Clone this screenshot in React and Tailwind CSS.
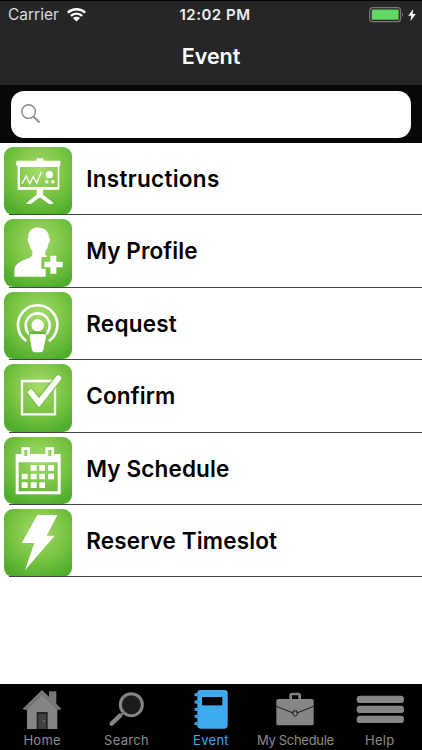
const ICONS = {
  board: {
    viewBox: "12 21 203 203",
    art: (
      <>
        <path d="M49 62h61v-7h20v7h51v15h-3v72h-49v15l31 24-4 4h-9l-25-19h-5l-25 19H80v-4l30-24v-15H53V77h-4zM60 81v60h113V81z" fillRule="evenodd" fill="#fff" />
        <path d="M66 131l13-23 10 23 11-21 10 19 14-33" fill="none" stroke="#fff" strokeWidth="4" />
        <circle cx="148" cy="104" r="11" fill="#fff" />
        <path d="M136 121h9v9h-9zM154 121h9v9h-9z" fill="#fff" />
      </>
    ),
  },
  profile: {
    viewBox: "12 13 203 203",
    art: (
      <path
        d="M116 39c20 0 31 13 31 31 4 2 4 13-2 17-1 10-4 17-9 21v10c0 4 1 5 4 5v4h-16v35h13v24H43v-17c0-17 10-25 29-33 15-6 25-9 25-17v-11c-5-4-8-11-9-21-6-4-7-15-3-18-1-18 11-31 31-31zM151 123h18v18h19v17h-19v19h-18v-19h-18v-17h18z"
        fill="#fff"
      />
    ),
  },
  request: {
    viewBox: "12 14 203 203",
    art: (
      <>
        <path d="M79 161A59 59 0 1 1 147 161" fill="none" stroke="#fff" strokeWidth="8" />
        <path d="M89 141A36 36 0 1 1 137 141" fill="none" stroke="#fff" strokeWidth="8" />
        <circle cx="113" cy="114" r="18" fill="#fff" />
        <path d="M88 133h50v20H88z" fill="#60b838" />
        <circle cx="113" cy="114" r="18" fill="#fff" />
        <path d="M94 140h39q6 0 5 7l-8 41q-2 7-8 7h-18q-6 0-8-7l-7-41q-1-7 5-7z" fill="#fff" />
      </>
    ),
  },
  confirm: {
    viewBox: "12 13 203 203",
    art: (
      <>
        <path d="M66 64h99v100H66z" fill="none" stroke="#fff" strokeWidth="7" />
        <path d="M93 99l24 30 57-72" fill="none" stroke="#78c243" strokeWidth="24" strokeLinecap="round" />
        <path d="M92 98l25 31 58-73" fill="none" stroke="#fff" strokeWidth="17" strokeLinecap="round" />
      </>
    ),
  },
  calendar: {
    viewBox: "12 14 203 203",
    art: (
      <>
        <path
          d="M47 65h17V45h26v20h46V45h26v20h20v121H47zM56 90v87h117V90zM73 52v19h9V52zM145 52v19h9V52z"
          fillRule="evenodd"
          fill="#fff"
        />
        <path
          d="M92 98h18v17H92zM118 98h17v17h-17zM144 98h18v17h-18zM65 124h18v17H65zM92 124h18v17H92zM118 124h17v17h-17zM144 124h18v17h-18zM65 150h18v17H65zM92 150h18v17H92zM118 150h17v17h-17z"
          fill="#fff"
        />
      </>
    ),
  },
  bolt: {
    viewBox: "12 15 203 203",
    art: <path d="M112 33h60l-32 62h24L75 199l28-82H65z" fill="#fff" />,
  },
};

const rows = [
  { label: "Instructions", icon: "board", tracking: "tracking-[0.3px]" },
  { label: "My Profile", icon: "profile", tracking: "tracking-[0.1px]" },
  { label: "Request", icon: "request", tracking: "tracking-[0.25px]" },
  { label: "Confirm", icon: "confirm", tracking: "tracking-[0.15px]" },
  { label: "My Schedule", icon: "calendar", tracking: "tracking-[0.15px]" },
  { label: "Reserve Timeslot", icon: "bolt", tracking: "tracking-[0.15px]" },
];

const tabs = [
  {
    label: "Home",
    viewBox: "61 24 132 126",
    art: (
      <>
        <path d="M148 34h22v36h-22z" fill="#777" />
        <path d="M127 32l46 46v69H82V78z" fill="#858585" />
        <path d="M69 86l58-56 58 56-5 3h-8l-45-45-45 45h-9z" fill="#777" />
        <path d="M82 87l45-44 45 44" fill="none" stroke="#5c5c5c" strokeWidth="1.500" />
        <path d="M111 96h33v51h-33z" fill="#222" />
        <path d="M116 102h23v45h-23z" fill="#414141" />
        <circle cx="133" cy="123" r="2.500" fill="#999" />
      </>
    ),
  },
  {
    label: "Search",
    viewBox: "314 24 132 126",
    art: (
      <>
        <circle cx="393" cy="74" r="33" fill="#1c1c1c" stroke="#858585" strokeWidth="9" />
        <path d="M371 97l-7 7" stroke="#777" strokeWidth="7" />
        <path d="M359 107l-25 24" stroke="#858585" strokeWidth="13" strokeLinecap="round" />
      </>
    ),
  },
  {
    label: "Event",
    active: true,
    viewBox: "147 24 132 126",
    art: (
      <>
        <path
          d="M181 30h73q9 0 9 9v97q0 10-9 10h-73q-9 0-9-10h-4q-5 0-5-5t5-5h4v-12h-4q-5 0-5-5t5-5h4V93h-4q-5 0-5-5t5-5h4V71h-4q-5 0-5-5t5-5h4V49h-4q-5 0-5-5t5-5h4q0-9 9-9z"
          fill="#3dabed"
        />
        <path d="M186 51h61v25h-61z" fill="#000" />
        <path d="M166 44h13M166 66h13M166 88h13M166 109h13M166 131h13" stroke="#2474a5" strokeWidth="1.500" />
      </>
    ),
  },
  {
    label: "My Schedule",
    tight: true,
    viewBox: "70 24 132 126",
    art: (
      <>
        <path d="M123 59V46q0-4 4-4h19q4 0 4 4v13" fill="none" stroke="#828282" strokeWidth="8" />
        <rect x="80" y="57" width="112" height="79" rx="5" fill="#858585" />
        <path d="M80 79l50 20M192 79l-50 20" stroke="#151515" strokeWidth="3" />
        <path d="M130 93h12v11l-6 6-6-6z" fill="#858585" stroke="#151515" strokeWidth="3" />
      </>
    ),
  },
  {
    label: "Help",
    viewBox: "323 24 132 126",
    art: (
      <>
        <rect x="319" y="47" width="142" height="22" rx="10" fill="#858585" />
        <rect x="319" y="77" width="142" height="22" rx="10" fill="#858585" />
        <rect x="319" y="107" width="142" height="22" rx="10" fill="#858585" />
      </>
    ),
  },
];

function StatusBar() {
  return (
    <div className="grid grid-cols-3 items-center h-[28px] pl-2 pr-1.5 text-white">
      <div className="flex items-center gap-2 text-[15.500px] text-[#dcdcdc]">
        Carrier
        <svg className="w-[19px] h-[14px]" viewBox="0 0 19 14">
          <path d="M.8 4.700a12.800 12.800 0 0 1 17.400 0M3.800 7.900a8.400 8.400 0 0 1 11.400 0" fill="none" stroke="#fff" strokeWidth="2.400" />
          <path d="M5.900 10.100a5.300 5.300 0 0 1 7.200 0L9.500 13.600z" fill="#fff" />
        </svg>
      </div>
      <div className="pl-1.5 text-center text-[15px] font-semibold text-[#eee] tracking-[0.5px] whitespace-nowrap">
        12:02 PM
      </div>
      <div className="flex items-center justify-end gap-1">
        <svg className="w-[35px] h-4" viewBox="0 0 35 16">
          <rect x=".7" y=".7" width="30.800" height="14" rx="3" fill="none" stroke="#777" strokeWidth="1.300" />
          <rect x="2.700" y="2.600" width="27" height="10.200" rx="1.200" fill="#62d863" />
          <path d="M33 5.300q2 2.400 0 4.800z" fill="#777" />
        </svg>
        <svg className="w-2 h-3" viewBox="0 0 8 12">
          <path d="M5.200 0L.2 6.800h3L2.500 12 7.800 4.900H4.600z" fill="#fff" />
        </svg>
      </div>
    </div>
  );
}

function RowIcon({ name }) {
  const icon = ICONS[name];
  return (
    <div className="size-[67.700px] shrink-0 rounded-[9px] overflow-hidden bg-[radial-gradient(circle_at_52%_34%,#a8dc6c_0%,#7cc546_45%,#4fae2b_85%)]">
      <svg className="block size-full" viewBox={icon.viewBox}>
        {icon.art}
      </svg>
    </div>
  );
}

export default function App() {
  return (
    <div className="flex flex-col w-[422px] h-[750px] bg-white overflow-hidden font-['Inter','Liberation_Sans',sans-serif]">
      <header className="h-[85px] shrink-0 bg-[#262626] border-t border-black">
        <StatusBar />
        <h1 className="text-center text-[21.500px] leading-[54px] font-semibold text-white">
          Event
        </h1>
      </header>

      {/* search */}
      <div className="h-[58px] shrink-0 bg-[#080808] px-[11px] pt-[5.500px]">
        <div className="flex items-center h-[47px] rounded-[13px] bg-white pl-2.5">
          <svg className="size-5" viewBox="0 0 20 20" fill="none" stroke="#8a8a8e">
            <circle cx="7.600" cy="7.600" r="6.800" strokeWidth="1.400" />
            <path d="M12.600 12.600l5.900 5.900" strokeWidth="1.900" />
          </svg>
        </div>
      </div>

      <main className="flex-1">
        {rows.map((row) => (
          <div key={row.label} className="flex flex-col h-[72.400px] pl-1">
            <div className="flex items-start flex-1 min-h-0 pt-1">
              <RowIcon name={row.icon} />
              <span
                className={`pl-[14.500px] text-[22.500px] leading-[63px] font-semibold text-black whitespace-nowrap ${row.tracking}`}
              >
                {row.label}
              </span>
            </div>
            <div className="ml-[5px] h-px shrink-0 bg-[#444]" />
          </div>
        ))}
      </main>

      <nav className="grid grid-cols-5 h-[66px] shrink-0 bg-black pt-1">
        {tabs.map((tab) => (
          <div
            key={tab.label}
            className={`flex flex-col items-center text-[13px] leading-[20px] whitespace-nowrap ${
              tab.active ? "text-[#3dabed]" : "text-[#8c8c8c]"
            } ${tab.tight ? "tracking-[-0.3px]" : "tracking-[0.3px]"}`}
          >
            <svg className="w-11 h-[42px] shrink-0 overflow-visible" viewBox={tab.viewBox}>
              {tab.art}
            </svg>
            {tab.label}
          </div>
        ))}
      </nav>
    </div>
  );
}
